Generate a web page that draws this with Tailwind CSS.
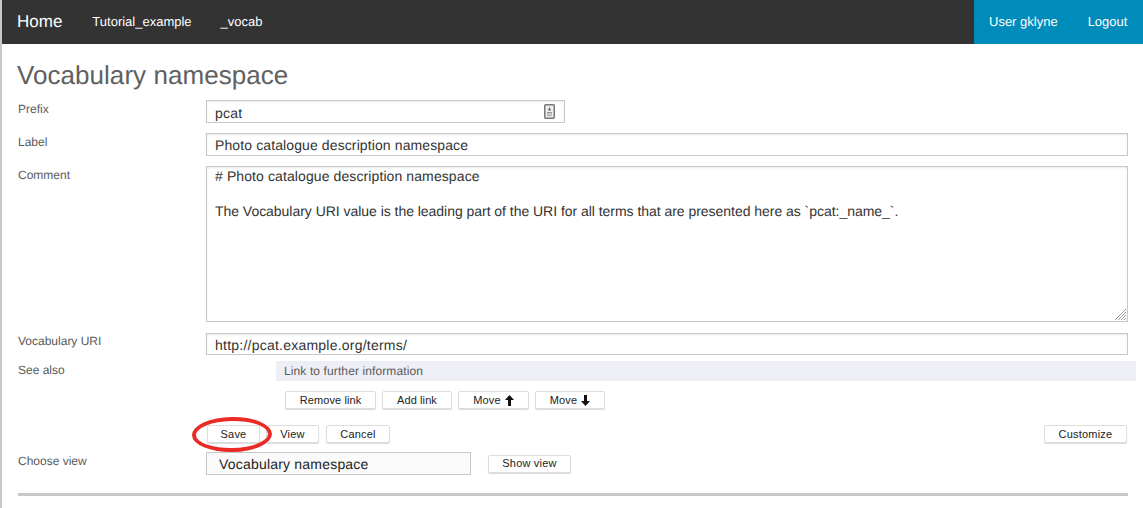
<!DOCTYPE html>
<html>
<head>
<meta charset="utf-8">
<script src="https://cdn.jsdelivr.net/npm/@tailwindcss/browser@4"></script>
</head>
<body class="bg-white overflow-hidden font-['Liberation_Sans',Arial,sans-serif] [text-rendering:geometricPrecision]">
<div class="w-[1143px] h-[508px] border-l-2 border-[#c8c8c8] overflow-hidden">
  <nav class="h-11 bg-[#333333] flex items-stretch text-white">
    <div class="flex items-center flex-1 pl-[15px]">
      <span class="text-[17px] mr-[30px] -mt-[1px]">Home</span>
      <span class="text-[13px] mr-[29px]">Tutorial_example</span>
      <span class="text-[13px]">_vocab</span>
    </div>
    <div class="w-[169px] bg-[#008cba] flex items-center pl-[15px] text-[13px]">
      <span class="mr-[30px]">User gklyne</span>
      <span>Logout</span>
    </div>
  </nav>
  <main class="pl-4">
    <h1 class="text-[26px] leading-[30px] text-[#606060] -ml-[1px] mt-4 mb-[10px] tracking-[0.05px]">Vocabulary namespace</h1>

    <div class="flex h-[23px] mb-[10px]">
      <label class="w-[188px] pt-[1px] text-[12px] leading-[17px] text-[#5a5a5a]">Prefix</label>
      <div class="w-[359px] h-[23px] border border-[#c8c8c8] shadow-[inset_0_1px_2px_rgba(0,0,0,0.08)] pl-2 pr-[9px] flex items-center justify-between text-[14px] text-[#333]">
        <span class="pt-[3px] tracking-[0.2px]">pcat</span>
        <svg width="11" height="15" viewBox="0 0 11 15"><rect x="0.75" y="0.75" width="9.5" height="13.5" rx="1" fill="#eee" stroke="#777" stroke-width="1.5"/><path d="M5.5 3 7 6.5H4Z" fill="#666"/><rect x="3" y="8" width="5" height="1.5" fill="#999"/><rect x="3" y="10.5" width="5" height="1.5" fill="#aaa"/></svg>
      </div>
    </div>

    <div class="flex h-[23px] mb-[10px]">
      <label class="w-[188px] pt-[1px] text-[12px] leading-[17px] text-[#5a5a5a]">Label</label>
      <div class="w-[922px] h-[23px] border border-[#c8c8c8] shadow-[inset_0_1px_2px_rgba(0,0,0,0.08)] pl-2 pt-[2px] flex items-center text-[14px] text-[#333] tracking-[0.11px]">Photo catalogue description namespace</div>
    </div>

    <div class="flex h-[156px] mb-[11px]">
      <label class="w-[188px] pt-[1px] text-[12px] leading-[17px] text-[#5a5a5a]">Comment</label>
      <div class="relative w-[922px] h-[156px] border border-[#c8c8c8] shadow-[inset_0_1px_2px_rgba(0,0,0,0.08)] pl-2 pt-[1px] text-[14px] leading-[17.5px] text-[#333]">
        <p class="tracking-[0.1px]"># Photo catalogue description namespace</p>
        <p class="mt-[17.5px] tracking-[-0.035px]">The Vocabulary URI value is the leading part of the URI for all terms that are presented here as `pcat:_name_`.</p>
        <svg class="absolute right-0 bottom-0" width="13" height="13" viewBox="0 0 13 13"><path d="M1 12 12 1M4 12 12 4M7 12 12 7M10 12 12 10" stroke="#999" stroke-width="1"/></svg>
      </div>
    </div>

    <div class="flex h-[22px] mb-[6px]">
      <label class="w-[188px] text-[12px] leading-[17px] text-[#5a5a5a]">Vocabulary URI</label>
      <div class="w-[922px] h-[22px] border border-[#c8c8c8] shadow-[inset_0_1px_2px_rgba(0,0,0,0.08)] pl-2 pt-[2px] flex items-center text-[14px] text-[#333] tracking-[0.23px]">http://pcat.example.org/terms/</div>
    </div>

    <div class="flex h-5 mb-[10px]">
      <label class="w-[258px] pt-[1px] text-[12px] leading-[17px] text-[#5a5a5a]">See also</label>
      <div class="w-[860px] h-5 bg-[#eeeef6] pl-2 flex items-center text-[12px] text-[#5a5a5a] tracking-[0.11px]">Link to further information</div>
    </div>

    <div class="flex gap-[6px] ml-[267px] mb-4 text-[11px] text-[#222] tracking-[0.1px]">
      <button class="w-[91px] h-[18px] bg-white border border-[#ddd] rounded-[2px] shadow-[0_1px_1px_rgba(0,0,0,0.15)] leading-none">Remove link</button>
      <button class="w-[70px] h-[18px] bg-white border border-[#ddd] rounded-[2px] shadow-[0_1px_1px_rgba(0,0,0,0.15)] leading-none">Add link</button>
      <button class="w-[71px] h-[18px] bg-white border border-[#ddd] rounded-[2px] shadow-[0_1px_1px_rgba(0,0,0,0.15)] leading-none flex items-center justify-center gap-[4px]">Move
        <svg width="9" height="11" viewBox="0 0 9 11"><path d="M4.5 0 9 5H6V11H3V5H0Z" fill="#111"/></svg></button>
      <button class="w-[70px] h-[18px] bg-white border border-[#ddd] rounded-[2px] shadow-[0_1px_1px_rgba(0,0,0,0.15)] leading-none flex items-center justify-center gap-[4px]">Move
        <svg width="9" height="11" viewBox="0 0 9 11"><path d="M4.5 11 9 6H6V0H3V6H0Z" fill="#111"/></svg></button>
    </div>

    <div class="relative flex items-center h-[18px] w-[1109px] mb-[9px] text-[11px] text-[#222] tracking-[0.2px]">
      <button class="w-[53px] h-[18px] ml-[189px] bg-white border border-[#ddd] rounded-[2px] shadow-[0_1px_1px_rgba(0,0,0,0.15)] leading-none">Save</button>
      <button class="w-[53px] h-[18px] ml-[6px] bg-white border border-[#ddd] rounded-[2px] shadow-[0_1px_1px_rgba(0,0,0,0.15)] leading-none">View</button>
      <button class="w-[64px] h-[18px] ml-[7px] bg-white border border-[#ddd] rounded-[2px] shadow-[0_1px_1px_rgba(0,0,0,0.15)] leading-none">Cancel</button>
      <button class="w-[83px] h-[18px] ml-auto bg-white border border-[#ddd] rounded-[2px] shadow-[0_1px_1px_rgba(0,0,0,0.15)] leading-none">Customize</button>
      <div class="absolute left-[174px] -top-[8px] w-[80px] h-[35px] rounded-[50%] border-4 border-[#ea2b25] -rotate-1"></div>
    </div>

    <div class="flex items-center h-[23px] mb-[18px]">
      <label class="w-[188px] text-[12px] leading-[17px] text-[#5a5a5a] -mt-[5px]">Choose view</label>
      <div class="w-[265px] h-[23px] bg-[#fafafa] border border-[#c8c8c8] pl-3 pt-[2px] flex items-center text-[14px] text-[#222] tracking-[0.2px]">Vocabulary namespace</div>
      <button class="w-[83px] h-[18px] ml-[17px] bg-white border border-[#ddd] rounded-[2px] shadow-[0_1px_1px_rgba(0,0,0,0.15)] leading-none text-[11px] text-[#222] tracking-[0.2px]">Show view</button>
    </div>

    <hr class="w-[1110px] h-[3px] bg-[#c8c8c8] border-0">
  </main>
</div>
</body>
</html>
